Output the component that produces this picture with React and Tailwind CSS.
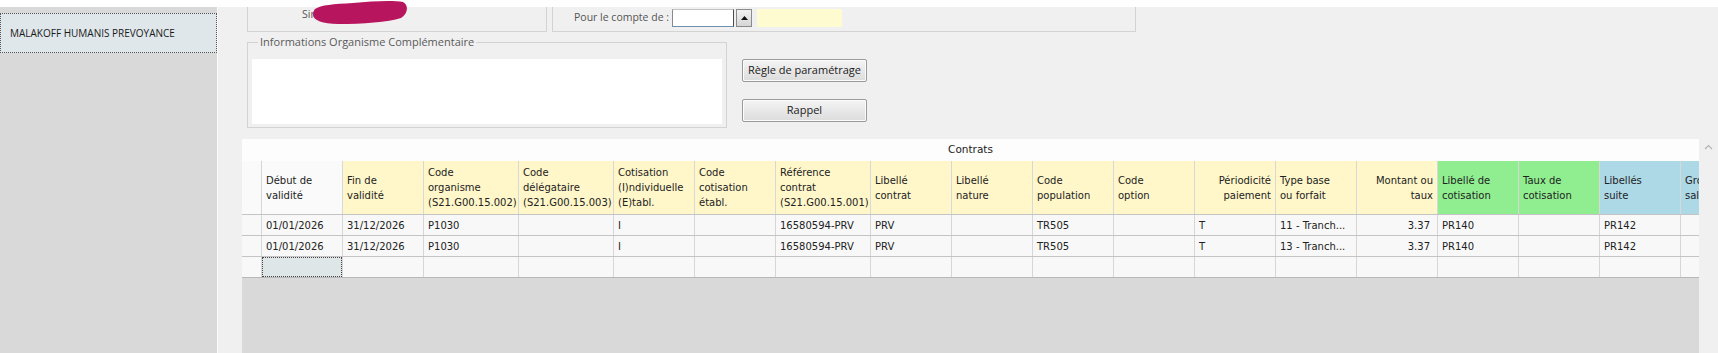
import React from 'react';

const columns = [
  { label: ['Début de', 'validité'], w: 'w-[81px]', bg: 'bg-[#fafafa]' },
  { label: ['Fin de', 'validité'], w: 'w-[81px]', bg: 'bg-[#fff7c9]' },
  { label: ['Code', 'organisme', '(S21.G00.15.002)'], w: 'w-[95px]', bg: 'bg-[#fff7c9]' },
  { label: ['Code', 'délégataire', '(S21.G00.15.003)'], w: 'w-[95px]', bg: 'bg-[#fff7c9]' },
  { label: ['Cotisation', '(I)ndividuelle', '(E)tabl.'], w: 'w-[81px]', bg: 'bg-[#fff7c9]' },
  { label: ['Code', 'cotisation', 'établ.'], w: 'w-[81px]', bg: 'bg-[#fff7c9]' },
  { label: ['Référence', 'contrat', '(S21.G00.15.001)'], w: 'w-[95px]', bg: 'bg-[#fff7c9]' },
  { label: ['Libellé', 'contrat'], w: 'w-[81px]', bg: 'bg-[#fff7c9]' },
  { label: ['Libellé', 'nature'], w: 'w-[81px]', bg: 'bg-[#fff7c9]' },
  { label: ['Code', 'population'], w: 'w-[81px]', bg: 'bg-[#fff7c9]' },
  { label: ['Code', 'option'], w: 'w-[81px]', bg: 'bg-[#fff7c9]' },
  { label: ['Périodicité', 'paiement'], w: 'w-[81px]', bg: 'bg-[#fff7c9]', right: true },
  { label: ['Type base', 'ou forfait'], w: 'w-[81px]', bg: 'bg-[#fff7c9]' },
  { label: ['Montant ou', 'taux'], w: 'w-[81px]', bg: 'bg-[#fff7c9]', right: true, numeric: true },
  { label: ['Libellé de', 'cotisation'], w: 'w-[81px]', bg: 'bg-[#90ee90]' },
  { label: ['Taux de', 'cotisation'], w: 'w-[81px]', bg: 'bg-[#90ee90]' },
  { label: ['Libellés', 'suite'], w: 'w-[81px]', bg: 'bg-[#add8e6]' },
  { label: ['Groupe', 'salarié'], w: 'w-[81px]', bg: 'bg-[#add8e6]' },
];

const rows = [
  ['01/01/2026', '31/12/2026', 'P1030', '', 'I', '', '16580594-PRV', 'PRV', '', 'TR505', '', 'T', '11 - Tranch...', '3.37', 'PR140', '', 'PR142', ''],
  ['01/01/2026', '31/12/2026', 'P1030', '', 'I', '', '16580594-PRV', 'PRV', '', 'TR505', '', 'T', '13 - Tranch...', '3.37', 'PR140', '', 'PR142', ''],
];

const uiFont = { fontFamily: "'Open Sans', 'Noto Sans', sans-serif" };

const WinButton = ({ children }) => (
  <button className="w-[125px] h-[23px] border border-[#9a9a9a] rounded-[2px] bg-gradient-to-b from-[#f4f4f4] to-[#dcdcdc] text-[11px] text-[#1a1a1a] shadow-[inset_0_0_0_1px_#fcfcfc]">
    {children}
  </button>
);

const ContractsGrid = () => (
  <div className="flex-1 min-w-0 flex flex-col bg-white overflow-hidden font-['DejaVu_Sans',sans-serif] text-[10px] text-[#222]">
    <div className="h-[22px] flex items-center justify-center bg-[#fdfdfd] text-[10.5px]">Contrats</div>

    {/* header */}
    <div className="flex h-[54px] border-b border-[#c4c4c4]">
      <div className="w-[20px] shrink-0 bg-[#fafafa] border-r border-[#d6d6d6]"></div>
      {columns.map((c, i) => (
        <div
          key={i}
          className={`${c.w} ${c.bg} shrink-0 flex flex-col justify-center px-[4px] border-r border-[#d8d8d8] leading-[15px] whitespace-nowrap overflow-hidden ${c.right ? 'items-end text-right' : 'items-start'}`}
        >
          {c.label.map((l, j) => (
            <span key={j}>{l}</span>
          ))}
        </div>
      ))}
    </div>

    {/* data rows */}
    {rows.map((r, ri) => (
      <div key={ri} className="flex h-[21px] border-b border-[#c4c4c4] bg-[#f8f8f8]">
        <div className="w-[20px] shrink-0 border-r border-[#d6d6d6]"></div>
        {columns.map((c, i) => (
          <div
            key={i}
            className={`${c.w} shrink-0 flex items-center border-r border-[#d6d6d6] whitespace-nowrap overflow-hidden ${c.numeric ? 'justify-end pr-[7px]' : 'pl-[4px]'}`}
          >
            {r[i]}
          </div>
        ))}
      </div>
    ))}

    {/* new row */}
    <div className="flex h-[21px] border-b border-[#b8b8b8] bg-[#f8f8f8]">
      <div className="w-[20px] shrink-0 border-r border-[#d6d6d6]"></div>
      {columns.map((c, i) => (
        <div key={i} className={`${c.w} shrink-0 border-r border-[#d6d6d6]`}>
          {i === 0 && <div className="h-full w-full border border-dotted border-[#444] bg-[#dfe6e8]"></div>}
        </div>
      ))}
    </div>

    <div className="flex-1 bg-[#d9d9d9]"></div>
  </div>
);

export default function App() {
  return (
    <div className="w-[1718px] h-[353px] flex flex-col bg-white overflow-hidden" style={uiFont}>
      <div className="h-[7px] bg-white shrink-0"></div>
      <div className="flex-1 flex min-h-0">
        {/* left list */}
        <div className="w-[217px] shrink-0 bg-[#d9d9d9] pt-[6px]">
          <div className="h-[40px] flex items-center pl-[9px] border border-dotted border-[#555] bg-[#dfe7ea] text-[10px] text-[#1a1a1a] whitespace-nowrap">
            MALAKOFF HUMANIS PREVOYANCE
          </div>
        </div>
        <div className="w-px shrink-0 bg-[#fafafa]"></div>

        {/* main */}
        <div className="flex-1 min-w-0 flex flex-col bg-[#f0f0f0] pl-[24px]">
          {/* top boxes */}
          <div className="flex pl-[5px] text-[10.5px] text-[#555] whitespace-nowrap">
            <div className="relative w-[300px] h-[25px] border-x border-b border-[#d3d3d3]">
              <span className="absolute left-[54px] top-0 leading-[14px]">Sir</span>
              <svg className="absolute left-[65px] top-[-7px]" width="95" height="25" viewBox="0 0 95 25">
                <path
                  d="M2 9 C 8 5, 20 4, 40 3 C 60 1, 80 0, 90 2 C 96 5, 95 14, 88 18 C 75 22, 50 24, 25 24 C 10 24, 0 20, 0 15 C 0 12, 1 10, 2 9 Z"
                  fill="#b8155f"
                />
              </svg>
            </div>
            <div className="ml-[5px] w-[584px] h-[25px] border-x border-b border-[#d3d3d3] flex items-start pt-[2px] pl-[21px]">
              <span className="w-[98px] h-[18px] flex items-center">Pour le compte de :</span>
              <div className="w-[62px] h-[18px] bg-white border border-t-[#c4c4c4] border-l-[#8a8a8a] border-r-[#4a4a4a] border-b-[#6f8fae]"></div>
              <div className="ml-[2px] w-[16px] h-[18px] border border-[#8a8a8a] bg-gradient-to-b from-[#f2f2f2] to-[#d6d6d6] flex items-center justify-center">
                <svg width="7" height="4" viewBox="0 0 7 4">
                  <path d="M3.5 0 L7 4 L0 4 Z" fill="#111" />
                </svg>
              </div>
              <div className="ml-[5px] w-[85px] h-[18px] bg-[#fffbd0]"></div>
            </div>
          </div>

          {/* informations + buttons */}
          <div className="flex pl-[5px] mt-[3px]">
            <fieldset className="w-[480px] h-[93px] border border-[#d3d3d3] px-[4px] pb-[2px]">
              <legend className="ml-[6px] px-[2px] text-[11px] leading-[14px] text-[#5a5a5a]">
                Informations Organisme Complémentaire
              </legend>
              <div className="mt-[10px] h-[65px] bg-white"></div>
            </fieldset>
            <div className="ml-[15px] pt-[24px] flex flex-col gap-[17px]">
              <WinButton>Règle de paramétrage</WinButton>
              <WinButton>Rappel</WinButton>
            </div>
          </div>

          {/* contracts table */}
          <div className="flex-1 min-h-0 flex mt-[11px]">
            <ContractsGrid />
            <div className="w-[19px] shrink-0 flex justify-center pt-[5px]">
              <svg width="9" height="6" viewBox="0 0 9 6">
                <path d="M1 5 L4.5 1.5 L8 5" fill="none" stroke="#b5b5b5" strokeWidth="1.2" />
              </svg>
            </div>
          </div>
        </div>
      </div>
    </div>
  );
}
